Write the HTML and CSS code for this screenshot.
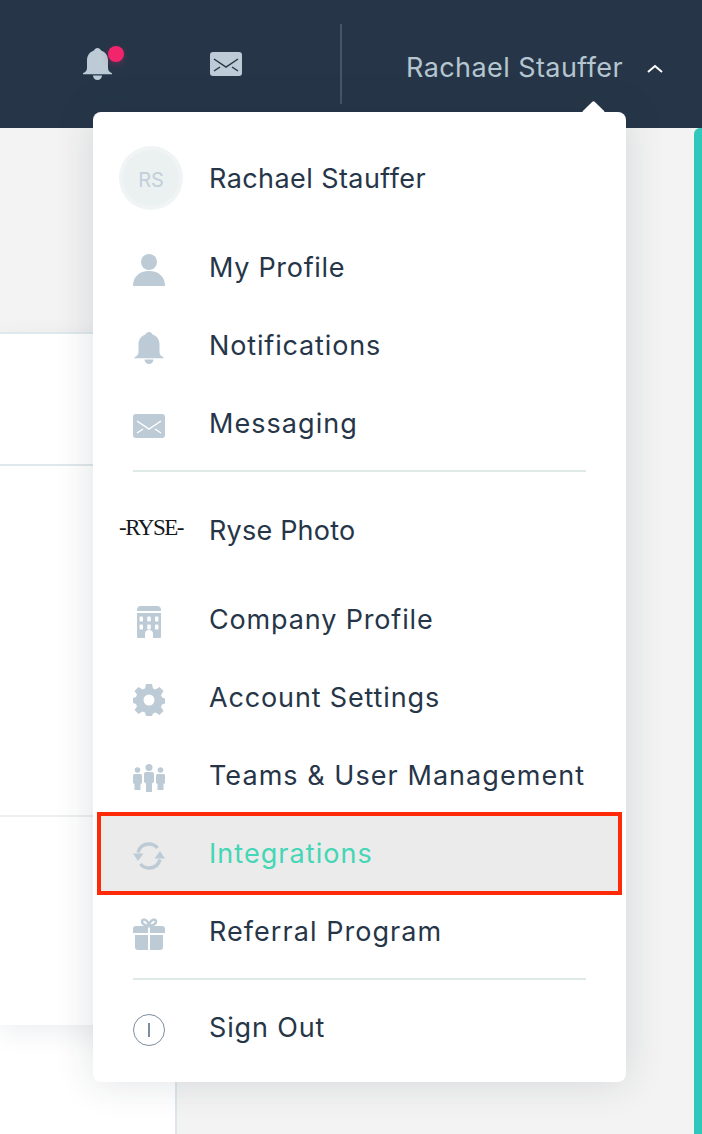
FILE: index.html
```html
<!DOCTYPE html>
<html lang="en">
<head>
<meta charset="utf-8">
<title>Account menu</title>
<link rel="stylesheet" href="styles.css">
</head>
<body>
<div class="page">
  <header class="topbar">
    <div class="top-icons">
      <span class="bell-wrap">
        <svg class="top-bell" viewBox="0 0 29 32"><path class="fill-b" d="M14.5 0c1.800 0 2.800 1 3.600 2.400C22.500 3.800 25 7.500 25 12v8c0 2.500 1.500 4.300 4 5.200v1H0v-1c2.500-.9 4-2.700 4-5.200v-8C4 7.500 6.500 3.800 10.900 2.400 11.700 1 12.700 0 14.500 0zM10 27.500h9c0 2.500-2 4.500-4.500 4.500S10 30 10 27.500z"/></svg>
        <span class="badge"></span>
      </span>
      <svg class="top-mail" viewBox="0 0 32 24"><rect class="fill-b" width="32" height="24" rx="3"/><path class="mail-line-dark" d="M4 7l12 8 12-8M4 19l6-4M28 19l-6-4"/></svg>
    </div>
    <span class="top-sep"></span>
    <div class="top-user">
      <span>Rachael Stauffer</span>
      <svg class="chev" viewBox="0 0 16 9"><path d="M1 8l7-6 7 6"/></svg>
    </div>
  </header>
  <main class="content">
    <div class="left">
      <div class="left-head"></div>
      <div class="card">
        <div class="card-row r1"></div>
        <div class="card-row r2"></div>
        <div class="card-row r3"></div>
        <div class="card-row r4"></div>
      </div>
      <div class="left-foot"></div>
    </div>
    <div class="right"><span class="teal"></span></div>
  </main>

  <nav class="menu">
    <span class="arrow"></span>
    <div class="row row-user">
      <span class="avatar"><span class="avatar-in">RS</span></span>
      <span class="label">Rachael Stauffer</span>
    </div>
    <a class="row">
      <span class="ico"><svg viewBox="0 0 32 32"><circle class="fill-b" cx="16" cy="8" r="8"/><path class="fill-b" d="M0 32c0-9 6-15 16-15s16 6 16 15z"/></svg></span>
      <span class="label ls-narrow">My Profile</span>
    </a>
    <a class="row">
      <span class="ico"><svg viewBox="0 0 29 32" class="ico-bell"><path class="fill-b" d="M14.5 0c1.800 0 2.800 1 3.600 2.400C22.500 3.800 25 7.500 25 12v8c0 2.500 1.500 4.300 4 5.200v1H0v-1c2.500-.9 4-2.700 4-5.200v-8C4 7.500 6.500 3.800 10.900 2.400 11.700 1 12.700 0 14.500 0zM10 27.500h9c0 2.500-2 4.500-4.500 4.500S10 30 10 27.500z"/></svg></span>
      <span class="label">Notifications</span>
    </a>
    <a class="row">
      <span class="ico"><svg viewBox="0 0 32 24" class="ico-mail"><rect class="fill-b" width="32" height="24" rx="3"/><path class="mail-line" d="M4 7l12 8 12-8M4 19l6-4M28 19l-6-4"/></svg></span>
      <span class="label ls-wide">Messaging</span>
    </a>
    <div class="divider d1"></div>
    <div class="row row-brand">
      <span class="brand">-RYSE-</span>
      <span class="label">Ryse Photo</span>
    </div>
    <a class="row">
      <span class="ico"><svg viewBox="0 0 32 32"><path class="fill-b" fill-rule="evenodd" d="M4 4a4 4 0 0 1 4-4h16a4 4 0 0 1 4 4v1H4zM4 7h24v24a1 1 0 0 1-1 1h-7v-4a4 4 0 0 0-8 0v4H5a1 1 0 0 1-1-1zM7.500 10.500a1 1 0 0 0-1 1v3a1 1 0 0 0 1 1h1.500a1 1 0 0 0 1-1v-3a1 1 0 0 0-1-1zM15.200 10.500a1 1 0 0 0-1 1v3a1 1 0 0 0 1 1h1.600a1 1 0 0 0 1-1v-3a1 1 0 0 0-1-1zM23 10.500a1 1 0 0 0-1 1v3a1 1 0 0 0 1 1h1.500a1 1 0 0 0 1-1v-3a1 1 0 0 0-1-1zM7.500 18.500a1 1 0 0 0-1 1v3a1 1 0 0 0 1 1h1.500a1 1 0 0 0 1-1v-3a1 1 0 0 0-1-1zM15.200 18.500a1 1 0 0 0-1 1v3a1 1 0 0 0 1 1h1.600a1 1 0 0 0 1-1v-3a1 1 0 0 0-1-1zM23 18.500a1 1 0 0 0-1 1v3a1 1 0 0 0 1 1h1.500a1 1 0 0 0 1-1v-3a1 1 0 0 0-1-1z"/></svg></span>
      <span class="label">Company Profile</span>
    </a>
    <a class="row">
      <span class="ico"><svg viewBox="0 0 32 32"><path class="fill-b" fill-rule="evenodd" d="M13 0h6l1 4.500 2.500 1L26.500 3l4 4-2.500 4 1 2.500L32 14.500v5l-3 1-1 2.500 2.500 4-4 4-4-2.500-2.500 1L19 32h-6l-1-3.500-2.500-1-4 2.500-4-4L4 22.500 3 20l-3-1v-5l3-1 1-2.500L1.500 7l4-4 4 2.500 2.500-1zM16 10.500a5.500 5.500 0 1 0 0 11 5.500 5.500 0 0 0 0-11z"/></svg></span>
      <span class="label">Account Settings</span>
    </a>
    <a class="row">
      <span class="ico"><svg viewBox="0 0 32 28" class="ico-team"><circle class="fill-b" cx="16" cy="3.500" r="3.500"/><path class="fill-b" d="M11 10a2 2 0 0 1 2-2h6a2 2 0 0 1 2 2v8l-2 1.500V28h-6v-8.500L11 18z"/><circle class="fill-b" cx="4.500" cy="6" r="2.800"/><path class="fill-b" d="M0 11.500A1.500 1.500 0 0 1 1.500 10h6A1.500 1.500 0 0 1 9 11.500V19l-1.500 1v6h-6v-6L0 19z"/><circle class="fill-b" cx="27.500" cy="6" r="2.800"/><path class="fill-b" d="M23 11.500a1.500 1.500 0 0 1 1.500-1.500h6a1.500 1.500 0 0 1 1.500 1.500V19l-1.500 1v6h-6v-6L23 19z"/></svg></span>
      <span class="label ls-wide">Teams &amp; User Management</span>
    </a>
    <a class="row row-active">
      <span class="ico"><svg viewBox="0 0 32 28" class="ico-sync"><path class="stroke-b" d="M5 10.500C6.500 5 10.500 2 16 2c3.500 0 6.500 1.500 8.500 4M27 17.500C25.500 23 21.500 26 16 26c-3.500 0-6.500-1.500-8.500-4"/><path class="fill-b" d="M0 11.500h10.500L5 19zM21.500 16.500H32L27 9z"/></svg></span>
      <span class="label label-active ls-wide">Integrations</span>
    </a>
    <a class="row">
      <span class="ico"><svg viewBox="0 0 32 32"><path class="stroke-b gift-bow" d="M16 8c-3-.5-7-1.500-7-4.500 0-3 6-3 7 4.500zM16 8c3-.5 7-1.500 7-4.500 0-3-6-3-7 4.500z"/><path class="fill-b" d="M3 8h12v7H0v-4a3 3 0 0 1 3-3zM17 8h12a3 3 0 0 1 3 3v4H17zM2 17h13v15H5a3 3 0 0 1-3-3zM17 17h13v12a3 3 0 0 1-3 3H17z"/></svg></span>
      <span class="label ls-wide">Referral Program</span>
    </a>
    <div class="divider d2"></div>
    <a class="row row-out">
      <span class="signout"><span class="signout-bar"></span></span>
      <span class="label">Sign Out</span>
    </a>
  </nav>
</div>
</body>
</html>
```
FILE: styles.css
```css
* { box-sizing: border-box; }
html, body { margin: 0; padding: 0; }
body { font-family: "Inter", "Lato", sans-serif; background: #f3f3f3; }
.page { position: relative; width: 702px; height: 1134px; overflow: hidden; display: flex; flex-direction: column; }

.fill-b { fill: #bccbd5; }
.stroke-b { fill: none; stroke: #bccbd5; stroke-width: 3.5; }
.gift-bow { stroke-width: 2.5; }
.mail-line { fill: none; stroke: #fff; stroke-width: 1.5; }
.mail-line-dark { fill: none; stroke: #263648; stroke-width: 1.5; }

.topbar { height: 128px; flex: none; background: #263648; display: flex; align-items: flex-start; }
.top-icons { width: 341px; padding: 48px 0 0 83px; display: flex; align-items: flex-start; gap: 98px; }
.bell-wrap { position: relative; display: block; width: 29px; height: 32px; }
.top-bell { display: block; width: 29px; height: 32px; }
.badge { position: absolute; left: 25px; top: -2px; width: 16px; height: 16px; border-radius: 50%; background: #f2246c; box-shadow: 0 2px 6px rgba(242, 36, 108, .3); }
.top-mail { display: block; width: 32px; height: 24px; margin-top: 4px; }
.top-sep { width: 2px; height: 80px; margin: 24px 0 0 -1px; background: #47566a; flex: none; }
.top-user { display: flex; align-items: center; padding: 51px 0 0 64px; color: #b5c6d0; font-size: 27px; line-height: 34px; letter-spacing: .42px; white-space: nowrap; }
.chev { width: 16px; height: 9px; margin: 0 0 0 24px; fill: none; stroke: #fff; stroke-width: 2; }

.content { flex: 1; display: flex; }
.left { width: 177px; display: flex; flex-direction: column; flex: none; }
.left-head { height: 204px; flex: none; }
.card { height: 693px; flex: none; background: #fff; box-shadow: 0 8px 24px rgba(30, 50, 70, .08); position: relative; display: flex; flex-direction: column; }
.card-row { border-top: 2px solid #dfe8ec; }
.r1 { height: 132px; }
.r2 { height: 351px; }
.r3 { height: 50px; border-top-color: #eceff1; }
.r4 { flex: 1; border-top-color: transparent; }
.left-foot { flex: 1; background: #fff; border-right: 2px solid #dce6ec; }
.right { flex: 1; display: flex; justify-content: flex-end; }
.teal { width: 8px; background: #30c8bb; border-top-left-radius: 6px; }

.menu { position: absolute; left: 93px; top: 112px; width: 533px; height: 970px; background: #fff; border-radius: 8px; box-shadow: 0 0 40px rgba(30, 40, 55, .14); display: flex; flex-direction: column; padding-top: 28px; }
.arrow { position: absolute; left: 491.5px; top: -8.5px; width: 17px; height: 17px; background: #fff; transform: rotate(45deg); border-radius: 2px; }

.row { height: 78px; flex: none; display: flex; align-items: center; padding-left: 40px; color: #263648; text-decoration: none; position: relative; }
.ico { width: 32px; height: 34px; flex: none; display: flex; align-items: center; justify-content: center; margin-top: 6px; }
.ico svg { display: block; width: 32px; height: 32px; }
.ico .ico-mail { height: 24px; }
.ico .ico-team { height: 28px; }
.ico .ico-sync { height: 28px; }
.label { margin-left: 44px; margin-top: 2px; font-size: 27px; line-height: 34px; letter-spacing: .85px; white-space: nowrap; }
.ls-narrow { letter-spacing: .7px; }
.ls-wide { letter-spacing: 1.05px; }
.row-user { height: 76px; padding: 0 0 0 26px; margin-bottom: 12px; }
.row-user .label { margin-left: 26px; letter-spacing: .42px; }
.avatar { width: 64px; height: 64px; border-radius: 50%; background: #f0f4f4; padding: 4px; flex: none; }
.avatar-in { display: flex; width: 100%; height: 100%; border-radius: 50%; background: #ebf0f0; color: #c1d0da; font-size: 20px; align-items: center; justify-content: center; padding-top: 3px; }

.divider { height: 2px; margin: 8px 40px 0; background: #dfe9e8; flex: none; }
.row-brand { height: 108px; padding: 8px 0 0 26px; }
.brand { width: 64px; flex: none; font-family: "Liberation Serif", serif; font-size: 23px; letter-spacing: -1.5px; color: #15181c; text-align: center; white-space: nowrap; margin-top: -5px; }
.row-brand .label { margin-left: 26px; letter-spacing: .2px; }

.row-active { height: 83px; margin: -2px 4px -3px; padding-left: 32px; background: #ebebeb; border: 4px solid #ff2b08; }
.row-active .ico { margin-top: 5px; }
.row-active .label-active { color: #44d6b5; margin-top: 0; }

.d2 { margin-top: 8px; }
.row-out { height: 96px; }
.signout { width: 32px; height: 32px; border: 1.5px solid #7e8d9e; border-radius: 50%; flex: none; display: flex; align-items: center; justify-content: center; margin-top: 4px; }
.signout-bar { width: 1.5px; height: 14px; background: #7e8d9e; }
.row-out .label { margin-top: -1px; }
```
